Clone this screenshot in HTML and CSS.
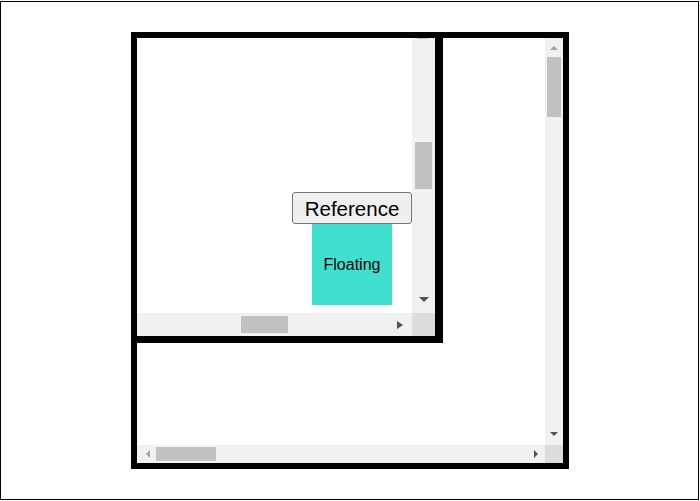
FILE: index.html
```html
<!DOCTYPE html>
<html lang="en">
<head>
  <meta charset="UTF-8">
  <title>Anchored floating element</title>
  <link rel="stylesheet" href="styles.css">
</head>
<body>
<div class="frame">
  <div class="outer">
    <div class="outer-view">
      <!--Inner scroller, partly clipped at its top-left-->
      <div class="inner">
        <div class="inner-view">
          <div class="stack">
            <button class="reference">Reference</button>
            <div class="floating">Floating</div>
          </div>
        </div>
        <div class="bar bar-v inner-v">
          <div class="clip-tip"></div>
          <div class="thumb"></div>
          <div class="spacer"></div>
          <div class="btn"><span class="arrow down"></span></div>
        </div>
        <div class="bar bar-h inner-h">
          <div class="thumb"></div>
          <div class="spacer"></div>
          <div class="btn"><span class="arrow right"></span></div>
        </div>
        <div class="corner"></div>
      </div>
    </div>
    <div class="bar bar-v outer-v">
      <div class="btn"><span class="arrow up off"></span></div>
      <div class="thumb"></div>
      <div class="spacer"></div>
      <div class="btn"><span class="arrow down"></span></div>
    </div>
    <div class="bar bar-h outer-h">
      <div class="btn"><span class="arrow left off"></span></div>
      <div class="thumb"></div>
      <div class="spacer"></div>
      <div class="btn"><span class="arrow right"></span></div>
    </div>
    <div class="corner"></div>
  </div>
</div>
</body>
</html>
```

FILE: styles.css
```css
body {
  margin: 0;
  background: #fff;
  font-family: "Liberation Sans", Arial, sans-serif;
}

.frame {
  margin-top: 1px;
  width: 699px;
  height: 499px;
  box-sizing: border-box;
  border: 1px solid #000;
  padding: 30px 0 0 130px;
}

.outer {
  display: grid;
  grid-template-columns: 408px 18px;
  grid-template-rows: 407px 18px;
  width: 438px;
  height: 437px;
  box-sizing: border-box;
  border: 6px solid #000;
}

.outer-view {
  overflow: hidden;
  background: #fff;
}

.inner {
  display: grid;
  grid-template-columns: 275px 23px;
  grid-template-rows: 275px 23px;
  width: max-content;
  border-right: 8px solid #000;
  border-bottom: 7px solid #000;
}

.inner-view {
  overflow: hidden;
}

.stack {
  display: flex;
  flex-direction: column;
  align-items: flex-start;
  padding: 154px 0 0 155px;
}

.reference {
  width: 120px;
  height: 32px;
  box-sizing: border-box;
  margin: 0;
  padding: 2px 0 0 0;
  border: 1px solid #767676;
  border-radius: 3px;
  background: #efefef;
  color: #000;
  font: 20.5px "Liberation Sans", Arial, sans-serif;
}

.floating {
  display: flex;
  align-items: center;
  justify-content: center;
  margin-left: 20px;
  width: 80px;
  height: 81px;
  padding-top: 1px;
  box-sizing: border-box;
  background: #40e0d0;
  font-size: 16px;
  color: #000;
}

/* scrollbars */
.bar {
  display: flex;
  background: #f1f1f1;
}

.bar-v {
  flex-direction: column;
}

.spacer {
  flex: 1;
}

.btn {
  display: flex;
  align-items: center;
  justify-content: center;
  flex: none;
}

.thumb {
  flex: none;
  background: #c1c1c1;
}

.corner {
  background: #dcdcdc;
}

.outer-v .btn { height: 18px; }
.outer-v .btn:first-child { padding-top: 2px; box-sizing: border-box; }
.outer-v .btn:last-child { padding-bottom: 4px; box-sizing: border-box; }
.outer-v .thumb { margin: 1px 2px 0 2px; height: 60px; }

.outer-h .btn { width: 18px; }
.outer-h .btn:first-child { padding-left: 4px; box-sizing: border-box; }
.outer-h .thumb { margin: 2px 0 2px 1px; width: 60px; }

.inner-v .clip-tip {
  flex: none;
  height: 1px;
  margin: 0 7px 0 5px;
  background: #c6c6c6;
}
.inner-v .thumb { margin: 103px 3px 0 3px; height: 47px; }
.inner-v .btn { height: 23px; padding-bottom: 4px; box-sizing: border-box; }

.inner-h .thumb { margin: 3px 0 3px 104px; width: 47px; }
.inner-h .btn { width: 23px; padding-right: 2px; box-sizing: border-box; }

.arrow {
  width: 0;
  height: 0;
  border-style: solid;
  border-color: transparent;
}

.arrow.up {
  border-width: 0 4px 4px 4px;
  border-bottom-color: #505050;
}

.arrow.down {
  border-width: 4px 4px 0 4px;
  border-top-color: #505050;
}

.arrow.left {
  border-width: 4px 4px 4px 0;
  border-right-color: #505050;
}

.arrow.right {
  border-width: 4px 0 4px 4px;
  border-left-color: #505050;
}

.inner .arrow.down {
  border-width: 5px 5px 0 5px;
}

.inner .arrow.right {
  border-width: 4.5px 0 4.5px 6px;
}

.arrow.up.off { border-bottom-color: #a3a3a3; }
.arrow.left.off { border-right-color: #a3a3a3; }
```
